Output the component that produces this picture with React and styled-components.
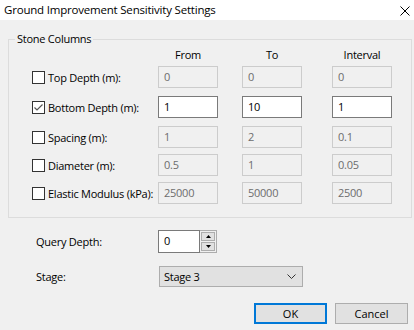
import styled, { createGlobalStyle } from "styled-components";

const GlobalStyle = createGlobalStyle`
  html, body {
    margin: 0;
    padding: 0;
    background: #f0f0f0;
  }
  body {
    font-family: "Open Sans", "Noto Sans", "Liberation Sans", sans-serif;
    font-size: 11px;
    letter-spacing: -0.25px;
    color: #000;
  }
`;

const rows = [
  { label: "Top Depth (m):", values: ["0", "0", "0"], checked: false, space: 0 },
  { label: "Bottom Depth (m):", values: ["1", "10", "1"], checked: true, space: 8 },
  { label: "Spacing (m):", values: ["1", "2", "0.1"], checked: false, space: 8 },
  { label: "Diameter (m):", values: ["0.5", "1", "0.05"], checked: false, space: 6 },
  { label: "Elastic Modulus (kPa):", values: ["25000", "50000", "2500"], checked: false, space: 6 },
];

const Window = styled.div`
  width: 414px;
  height: 330px;
  background: #f0f0f0;
  overflow: hidden;
`;

const TitleBar = styled.div`
  height: 20px;
  background: #fff;
  display: flex;
  align-items: center;
  justify-content: space-between;
  padding: 0 2px 0 4px;
  box-sizing: border-box;
`;

const Title = styled.span`
  font-size: 11.5px;
  letter-spacing: -0.2px;
  margin-top: -1px;
`;

const CloseButton = styled.button`
  border: none;
  background: none;
  padding: 0;
  width: 14px;
  height: 14px;
  margin-top: 2px;
  display: flex;
  align-items: center;
  justify-content: center;
`;

const Body = styled.div`
  padding: 11px 2px 0 8px;
`;

const Group = styled.fieldset`
  margin: 0;
  padding: 1px 0 13px 23px;
  border: 1px solid #dcdcdc;
  min-width: 0;
`;

const Legend = styled.legend`
  padding: 0 2px;
  margin-left: -17px;
  line-height: 16px;
`;

const Grid = styled.div`
  display: grid;
  grid-template-columns: 126px 84px 90px 60px;
  align-items: center;
`;

const Header = styled.div`
  width: 60px;
  text-align: center;
  line-height: 14px;
  margin-bottom: 4px;
`;

const Row = styled.div`
  display: contents;
`;

const CheckLabel = styled.label`
  display: flex;
  align-items: center;
  gap: 3px;
  margin-top: ${(p) => p.$space}px;
  white-space: nowrap;
`;

const Field = styled.div`
  width: 60px;
  height: 22px;
  box-sizing: border-box;
  border: 1px solid ${(p) => (p.$enabled ? "#7a7a7a" : "#cccccc")};
  background: ${(p) => (p.$enabled ? "#fff" : "#f0f0f0")};
  color: ${(p) => (p.$enabled ? "#000" : "#6d6d6d")};
  padding: 2px 0 0 5px;
  line-height: 15px;
  margin-top: ${(p) => p.$space}px;
`;

const Lower = styled.div`
  padding: 12px 0 0 28px;
  display: flex;
  flex-direction: column;
`;

const FormRow = styled.div`
  display: flex;
  align-items: center;
  margin-top: ${(p) => p.$space}px;
`;

const FormLabel = styled.span`
  width: 122px;
`;

const Spin = styled.div`
  display: flex;
`;

const SpinInput = styled.div`
  width: 42px;
  height: 23px;
  box-sizing: border-box;
  border: 1px solid #7a7a7a;
  background: #fff;
  padding: 2px 0 0 5px;
  line-height: 15px;
`;

const SpinButtons = styled.div`
  width: 17px;
  height: 23px;
  box-sizing: border-box;
  border: 1px solid #adadad;
  border-left: none;
  display: flex;
  flex-direction: column;
  justify-content: center;
  gap: 1px;
  padding: 1px 1px;
`;

const SpinButton = styled.div`
  flex: 1;
  background: #e1e1e1;
  border: 1px solid #adadad;
  display: flex;
  align-items: center;
  justify-content: center;
`;

const Select = styled.div`
  width: 144px;
  height: 21px;
  box-sizing: border-box;
  margin-left: 1px;
  border: 1px solid #adadad;
  background: #e1e1e1;
  display: flex;
  align-items: center;
  justify-content: space-between;
  padding: 0 6px 0 4px;
`;

const Buttons = styled.div`
  display: flex;
  justify-content: flex-end;
  gap: 8px;
  padding: 16px 4px 0 0;
`;

const Button = styled.button`
  width: 73px;
  height: 21px;
  box-sizing: border-box;
  font: inherit;
  background: #e1e1e1;
  border: ${(p) => (p.$default ? "2px solid #0078d7" : "1px solid #adadad")};
  padding: 0;
`;

const Checkbox = ({ checked }) => (
  <svg width="13" height="13" viewBox="0 0 13 13">
    <rect x="0.5" y="0.5" width="12" height="12" fill="#fff" stroke="#333" />
    {checked && (
      <path d="M2.5 6.5 L5 9 L10.5 3.5" fill="none" stroke="#555" strokeWidth="1.2" />
    )}
  </svg>
);

export default function App() {
  return (
    <Window>
      <GlobalStyle />
      <TitleBar>
        <Title>Ground Improvement Sensitivity Settings</Title>
        <CloseButton aria-label="Close">
          <svg width="10" height="10" viewBox="0 0 10 10">
            <path d="M0.5 0.5 L9.5 9.5 M9.5 0.5 L0.5 9.5" stroke="#000" strokeWidth="1" />
          </svg>
        </CloseButton>
      </TitleBar>
      <Body>
        <Group>
          <Legend>Stone Columns</Legend>
          <Grid>
            <span />
            <Header>From</Header>
            <Header>To</Header>
            <Header>Interval</Header>
            {rows.map((r) => (
              <Row key={r.label}>
                <CheckLabel $space={r.space}>
                  <Checkbox checked={r.checked} />
                  {r.label}
                </CheckLabel>
                {r.values.map((v, i) => (
                  <Field key={i} $enabled={r.checked} $space={r.space}>
                    {v}
                  </Field>
                ))}
              </Row>
            ))}
          </Grid>
        </Group>
        <Lower>
          <FormRow $space={0}>
            <FormLabel>Query Depth:</FormLabel>
            <Spin>
              <SpinInput>0</SpinInput>
              <SpinButtons>
                <SpinButton>
                  <svg width="5" height="3" viewBox="0 0 5 3">
                    <path d="M0 3 L2.5 0 L5 3 Z" fill="#000" />
                  </svg>
                </SpinButton>
                <SpinButton>
                  <svg width="5" height="3" viewBox="0 0 5 3">
                    <path d="M0 0 L2.5 3 L5 0 Z" fill="#000" />
                  </svg>
                </SpinButton>
              </SpinButtons>
            </Spin>
          </FormRow>
          <FormRow $space={13}>
            <FormLabel>Stage:</FormLabel>
            <Select>
              <span>Stage 3</span>
              <svg width="9" height="5" viewBox="0 0 9 5">
                <path d="M0.5 0.5 L4.5 4.5 L8.5 0.5" fill="none" stroke="#333" strokeWidth="1" />
              </svg>
            </Select>
          </FormRow>
        </Lower>
        <Buttons>
          <Button $default>OK</Button>
          <Button>Cancel</Button>
        </Buttons>
      </Body>
    </Window>
  );
}
